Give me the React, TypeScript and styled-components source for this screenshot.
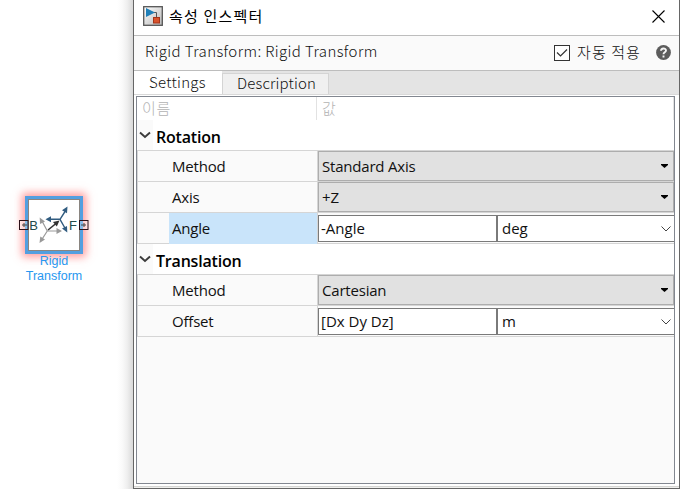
import React from 'react';
import styled, { createGlobalStyle } from 'styled-components';

const Global = createGlobalStyle`
  * { box-sizing: border-box; }
  body { margin: 0; background: #fff; overflow: hidden; }
`;

const Page = styled.div`
  display: flex;
  width: 680px;
  height: 489px;
  background: #fff;
  color: #111;
  font-family: 'Open Sans', 'Noto Sans', 'Noto Sans CJK KR', sans-serif;
  overflow: hidden;
`;

const Canvas = styled.div`
  width: 133px;
  height: 489px;
  padding-top: 196px;
  background: linear-gradient(to right, #fff 117px, #fafafa 122px, #efefef 127px, #d9d9d9 133px);
`;

const BlockRow = styled.div`
  display: flex;
  align-items: center;
  height: 58px;
  padding-left: 19px;
`;

const Port = styled.svg`
  display: block;
  width: 10px;
  height: 10px;
  z-index: 1;
`;

const Block = styled.div`
  display: flex;
  width: 58px;
  height: 58px;
  margin: 0 -4px;
  border: 3px solid #529fe0;
  box-shadow: 0 0 8px 3px rgba(255, 90, 90, 0.6);
  background: #fff;
`;

const BlockArt = styled.svg`
  display: block;
  width: 52px;
  height: 52px;
`;

const BlockName = styled.div`
  width: 108px;
  text-align: center;
  font: 12.5px/15px 'Liberation Sans', Arial, sans-serif;
  color: #2797f0;
`;

const Window = styled.div`
  display: flex;
  flex-direction: column;
  width: 547px;
  height: 489px;
  border: solid #666;
  border-width: 0 1px 1px;
  background: #fff;
`;

const TitleBar = styled.header`
  display: flex;
  align-items: center;
  height: 35px;
  padding: 0 14px 3px 9px;
`;

const AppIcon = styled.svg`
  width: 20px;
  height: 20px;
  margin-right: 6px;
`;

const Title = styled.h1`
  flex: 1;
  margin: 0;
  font: 400 15px/20px 'Noto Sans CJK KR', sans-serif;
  letter-spacing: 1.2px;
  color: #000;
`;

const CloseIcon = styled.svg`
  width: 13px;
  height: 13px;
`;

const ToolBar = styled.div`
  display: flex;
  align-items: center;
  height: 36px;
  padding: 0 8px 1px 11px;
  border: solid #bdbdbd;
  border-width: 1px 0;
  background: #fafafa;
  font: 300 15px/20px 'Noto Sans CJK KR', sans-serif;
  color: #111;
`;

const Subject = styled.div`
  flex: 1;
  padding-bottom: 3px;
  letter-spacing: 0.4px;
`;

const Check = styled.svg`
  width: 16px;
  height: 16px;
  margin: 0 7px 0 0;
`;

const Apply = styled.span`
  width: 79px;
  padding-bottom: 1px;
  letter-spacing: 1.1px;
`;

const Help = styled.svg`
  width: 15px;
  height: 15px;
`;

const Tabs = styled.nav`
  display: flex;
  height: 23px;
  background: #e4e4e4;
`;

const Tab = styled.div<{ $active?: boolean }>`
  width: ${(p) => (p.$active ? '88px' : '107px')};
  height: ${(p) => (p.$active ? '23px' : '21px')};
  margin-top: ${(p) => (p.$active ? '0' : '2px')};
  padding-left: ${(p) => (p.$active ? '15px' : '14px')};
  border: solid #d4d4d4;
  border-width: ${(p) => (p.$active ? '0' : '1px 1px 0')};
  background: ${(p) => (p.$active ? '#fff' : '#f0f0f0')};
  font: 300 15px/20px 'Noto Sans CJK KR', sans-serif;
  line-height: ${(p) => (p.$active ? '21px' : '18px')};
  letter-spacing: ${(p) => (p.$active ? '0.3px' : '0.15px')};
`;

const Body = styled.main`
  display: flex;
  flex: 1;
  padding: 1px 4px 4px 2px;
  border-top: 1px solid #d9d9d9;
  background: linear-gradient(to top, #f0f0ee 1px, #d5d5d3 1px 2px, #fff 2px);
`;

const Table = styled.section`
  flex: 1;
  border: 1px solid #828790;
  background: #fafafa;
`;

const HeadRow = styled.div`
  display: grid;
  grid-template-columns: 180px 1fr;
  height: 23px;
  background: #fff;
  font: 300 15px/22px 'Noto Sans CJK KR', sans-serif;
  letter-spacing: 0.8px;
  color: #b3b3b3;
`;

const HeadCell = styled.div`
  padding-left: 5px;
  border-right: 1px solid #e2e2e2;
`;

const GroupRow = styled.div`
  display: flex;
  align-items: center;
  height: 30px;
  background: linear-gradient(to right, #fafafa 16px, #fff 16px);
`;

const GroupArrow = styled.svg`
  width: 12px;
  height: 8px;
  margin: 0 5px 0 2px;
`;

const GroupName = styled.strong`
  font-size: 16px;
  font-weight: 600;
  line-height: 22px;
  padding-top: 3px;
  letter-spacing: -0.2px;
  color: #000;
`;

const Rows = styled.div`
  border-top: 1px solid #d5d5d5;
`;

const Row = styled.div`
  display: grid;
  grid-template-columns: 32px 148px 356px;
  height: 31px;
  border-bottom: 1px solid #d5d5d5;
  border-left: 1px solid #d5d5d5;
  font-size: 15px;
  line-height: 31px;
  letter-spacing: -0.2px;
`;

const Label = styled.div<{ $selected?: boolean }>`
  grid-column: 2;
  margin-left: -1px;
  padding-left: 3px;
  border-right: 1px solid #d5d5d5;
  background: ${(p) => (p.$selected ? '#c9e4fa' : 'transparent')};
`;

const Select = styled.div`
  display: flex;
  align-items: center;
  justify-content: space-between;
  height: 30px;
  padding: 0 5px 0 3px;
  border: 1px solid #adadad;
  background: #e1e1e1;
`;

const DropArrow = styled.svg`
  width: 7px;
  height: 4px;
`;

const Editors = styled.div`
  display: grid;
  grid-template-columns: 179px 177px;
  height: 26px;
  margin-top: 2px;
  line-height: 25px;
  letter-spacing: 0;
`;

const Field = styled.div`
  padding-left: 2px;
  border: 1px solid #7a7a7a;
  background: #fff;
`;

const UnitField = styled(Field)`
  display: flex;
  align-items: center;
  justify-content: space-between;
  padding: 0 3px 0 4px;
  border-right: 0;
`;

const Chevron = styled.svg`
  width: 10px;
  height: 6px;
`;

const PortMark = ({ side }: { side: 'in' | 'out' }) => (
  <Port viewBox="0 0 10 10">
    <rect x=".5" y=".5" width="8.5" height="9" fill="#fff" fillOpacity=".3" stroke="#2b1018" />
    <path d={side === 'in' ? 'M3 5h5M5 3v4' : 'M2 5h5M5 3v4'} stroke="#444" fill="none" />
  </Port>
);

const SelectRow = ({ label, value }: { label: string; value: string }) => (
  <Row>
    <Label>{label}</Label>
    <Select>
      {value}
      <DropArrow viewBox="0 0 7 4"><path d="M0 0h7v1L3.5 4 0 1z" fill="#000" /></DropArrow>
    </Select>
  </Row>
);

const ValueRow = ({ label, value, unit, selected }: { label: string; value: string; unit: string; selected?: boolean }) => (
  <Row>
    <Label $selected={selected}>{label}</Label>
    <Editors>
      <Field>{value}</Field>
      <UnitField>
        {unit}
        <Chevron viewBox="0 0 10 6"><path d="M.5 .5 5 5 9.500 .5" fill="none" stroke="#444" /></Chevron>
      </UnitField>
    </Editors>
  </Row>
);

const Group = ({ name, children }: { name: string; children: React.ReactNode }) => (
  <>
    <GroupRow>
      <GroupArrow viewBox="0 0 12 8"><path d="M1 1.500 6 6 11 1.500" fill="none" stroke="#3c3c3c" strokeWidth="1.900" /></GroupArrow>
      <GroupName>{name}</GroupName>
    </GroupRow>
    <Rows>{children}</Rows>
  </>
);

export default function App() {
  return (
    <Page>
      <Global />
      <Canvas>
        <BlockRow>
          <PortMark side="in" />
          <Block>
            <BlockArt viewBox="0 0 52 52">
              <rect x=".5" y=".5" width="51" height="51" fill="#fff" stroke="#8a8580" />
              <g fontFamily="Liberation Sans" fontSize="13" fill="#234b4b">
                <text x="1.200" y="30.500">B</text>
                <text x="41" y="30.500">F</text>
              </g>
              <g stroke="#999" fill="#999" strokeWidth="1.200">
                <path d="M19.300 32 14 22M19.300 32H31M19.300 32 13.500 41" />
                <path d="m11.700 18.500 5.300 4-5 2.500zM34 32l-5.500-3v6zM11.500 44l.8-6.500 4.700 3z" stroke="none" />
              </g>
              <g stroke="#333" fill="#333" strokeWidth="1.600">
                <path d="m20 31 8-6.500" />
                <path d="m31.500 21.500-6.500 1.500 3.800 4.500z" stroke="none" />
              </g>
              <g stroke="#315c80" fill="#315c80" strokeWidth="1.400">
                <path d="M32 20.300H21M32 20.300 38 11M32 20.300 37.500 30" />
                <path d="m17.500 20.300 5.500-3v6zM39.500 7.500l-5.500 3.800 5 3zM39.300 33.500l-5.300-4 5-2.500z" stroke="none" />
              </g>
            </BlockArt>
          </Block>
          <PortMark side="out" />
        </BlockRow>
        <BlockName>Rigid<br />Transform</BlockName>
      </Canvas>
      <Window>
        <TitleBar>
          <AppIcon viewBox="0 0 20 20">
            <defs>
              <linearGradient id="plate" x2="1" y2="1"><stop stopColor="#fff" /><stop offset="1" stopColor="#b8b8b8" /></linearGradient>
            </defs>
            <rect x=".7" y=".7" width="18.600" height="18.600" fill="url(#plate)" stroke="#555" strokeWidth="1.300" />
            <path d="M11 6.500h2.500V12" fill="none" stroke="#555" />
            <path d="m3 2 9 4.500L3 11z" fill="#1f7fb8" />
            <rect x="10.500" y="11.500" width="6" height="5.500" fill="#d9532c" stroke="#a3341a" />
          </AppIcon>
          <Title>속성 인스펙터</Title>
          <CloseIcon viewBox="0 0 13 13"><path d="m.5 .5 12 12M12.500 .5l-12 12" stroke="#000" strokeWidth="1.100" /></CloseIcon>
        </TitleBar>
        <ToolBar>
          <Subject>Rigid Transform: Rigid Transform</Subject>
          <Check viewBox="0 0 16 16">
            <rect x=".5" y=".5" width="15" height="15" fill="#fff" stroke="#333" />
            <path d="m3 7.500 3.500 3.500L13 4.500" fill="none" stroke="#333" strokeWidth="1.200" />
          </Check>
          <Apply>자동 적용</Apply>
          <Help viewBox="0 0 15 15">
            <circle cx="7.500" cy="7.500" r="7.400" fill="#5c5c5c" />
            <path d="M5 5.800C5 2.700 10 2.700 10 5.500c0 1.800-2.500 1.700-2.500 3.700M7.500 10.500v2" fill="none" stroke="#f4f4f4" strokeWidth="1.900" />
          </Help>
        </ToolBar>
        <Tabs>
          <Tab $active>Settings</Tab>
          <Tab>Description</Tab>
        </Tabs>
        <Body>
          <Table>
            <HeadRow><HeadCell>이름</HeadCell><HeadCell>값</HeadCell></HeadRow>
            <Group name="Rotation">
              <SelectRow label="Method" value="Standard Axis" />
              <SelectRow label="Axis" value="+Z" />
              <ValueRow label="Angle" value="-Angle" unit="deg" selected />
            </Group>
            <Group name="Translation">
              <SelectRow label="Method" value="Cartesian" />
              <ValueRow label="Offset" value="[Dx Dy Dz]" unit="m" />
            </Group>
          </Table>
        </Body>
      </Window>
    </Page>
  );
}
